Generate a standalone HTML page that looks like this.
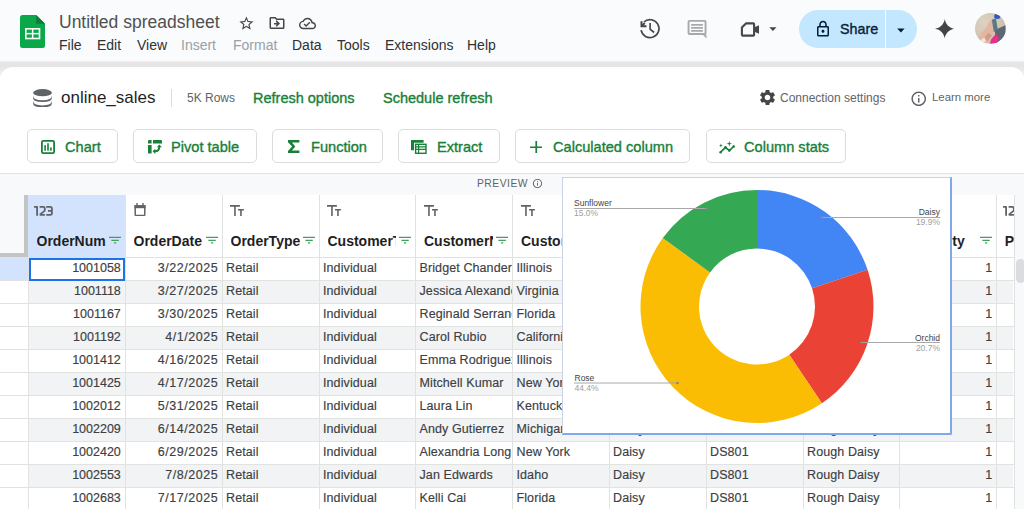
<!DOCTYPE html>
<html><head><meta charset="utf-8"><style>
*{margin:0;padding:0;box-sizing:border-box}
html,body{width:1024px;height:509px;overflow:hidden;background:#f9fbfd;font-family:"Liberation Sans",sans-serif;position:relative}
.a{position:absolute;white-space:nowrap}
#title{left:59px;top:12px;font-size:17.5px;color:#505050}
.menu{top:36.6px;font-size:14px;color:#303134}
.menu.dis{color:#9aa0a6}
#band{left:0;top:60.5px;width:1024px;height:22px;background:linear-gradient(to bottom,#f3f4f5 0,#e6e6e6 1.5px,#e5e5e5 6px,#f2f2f2 14px,#ffffff 21px)}
#card{left:0;top:66.8px;width:1024px;height:442px;background:#fff;border-radius:13px 13px 0 0}
.green{color:#188038;font-size:14.5px;-webkit-text-stroke:0.35px #188038}
.btn{position:absolute;top:128.5px;height:34px;border:1px solid #dadce0;border-radius:5px;background:#fff}
.btn span{position:absolute;top:9px;font-size:14.6px;color:#188038;-webkit-text-stroke:0.35px #188038;white-space:nowrap}
#preview{left:0;top:173px;width:1024px;height:22.5px;background:#f8f9fa;border-top:1px solid #e3e3e3;border-bottom:1px solid #e6e6e6}
.rowbg{position:absolute;left:28px;width:985.4px;height:23px}
.hl{position:absolute;left:0;width:1014.2px;height:1px;background:#e1e3e1}
.vl{position:absolute;top:195px;width:1px;height:314px;background:#e1e3e1}
.cell{position:absolute;height:23px;line-height:21.5px;font-size:12.5px;color:#3c4043;-webkit-text-stroke:0.15px #3c4043;padding:0 4px;overflow:hidden;white-space:nowrap}
.cell.r{text-align:right;padding-right:5px}
.hname{position:absolute;top:233px;font-size:14px;font-weight:bold;color:#1f1f1f;white-space:nowrap;overflow:hidden}
.ttype{position:absolute;top:204px;font-size:12px;color:#444;white-space:nowrap}

</style></head><body>
<!-- top bar -->
<svg class="a" style="left:20px;top:15px" width="25" height="33" viewBox="0 0 25 33">
<path d="M2.5 0H16.2L25 8.7V30.5Q25 33 22.5 33H2.5Q0 33 0 30.5V2.5Q0 0 2.5 0Z" fill="#0ba84a"/>
<path d="M16.2 0L25 8.7H16.2Z" fill="#0a7f38"/>
<rect x="5" y="13" width="15.3" height="11.3" fill="#fff"/>
<rect x="6.6" y="14.6" width="5.3" height="3.3" fill="#0ba84a"/><rect x="13.4" y="14.6" width="5.3" height="3.3" fill="#0ba84a"/>
<rect x="6.6" y="19.4" width="5.3" height="3.3" fill="#0ba84a"/><rect x="13.4" y="19.4" width="5.3" height="3.3" fill="#0ba84a"/>
</svg>
<div id="title" class="a">Untitled spreadsheet</div>
<svg class="a" style="left:238.1px;top:14.6px" width="16.8" height="16.8" viewBox="0 0 24 24"><path fill="#444746" d="M22 9.24l-7.19-.62L12 2 9.19 8.63 2 9.24l5.46 4.73L5.82 21 12 17.27 18.18 21l-1.63-7.03L22 9.24zM12 15.4l-3.760 2.270 1-4.280-3.320-2.880 4.380-.38L12 6.1l1.710 4.040 4.380.38-3.320 2.880 1 4.280L12 15.4z"/></svg>
<svg class="a" style="left:267.8px;top:14.3px" width="18" height="18" viewBox="0 0 24 24"><path fill="#444746" d="M20 6h-8l-2-2H4c-1.1 0-1.990.9-1.990 2L2 18c0 1.1.9 2 2 2h16c1.1 0 2-.9 2-2V8c0-1.1-.9-2-2-2zm0 12H4V6h5.170l2 2H20v10zm-8.160-6H8v2h3.840l-1.590 1.590L11.660 17 16 12.670 11.660 8.340l-1.410 1.410L11.840 12z"/></svg>
<svg class="a" style="left:299.2px;top:14.5px" width="17" height="17" viewBox="0 0 24 24"><path fill="#444746" d="M19.350 10.040C18.670 6.590 15.640 4 12 4 9.110 4 6.600 5.640 5.350 8.040 2.340 8.360 0 10.910 0 14c0 3.310 2.690 6 6 6h13c2.760 0 5-2.240 5-5 0-2.640-2.050-4.780-4.650-4.960zM19 18H6c-2.210 0-4-1.790-4-4 0-2.050 1.530-3.760 3.560-3.970l1.070-.11.5-.95C8.080 7.140 9.940 6 12 6c2.620 0 4.880 1.860 5.390 4.430l.3 1.500 1.530.11c1.560.1 2.780 1.410 2.780 2.960 0 1.650-1.350 3-3 3zm-9-3.820l-2.090-2.090L6.500 13.500 10 17l6.010-6.010-1.410-1.410z"/></svg>
<div class="a menu" style="left:59px">File</div>
<div class="a menu" style="left:97px">Edit</div>
<div class="a menu" style="left:137px">View</div>
<div class="a menu dis" style="left:181px">Insert</div>
<div class="a menu dis" style="left:233px">Format</div>
<div class="a menu" style="left:292px">Data</div>
<div class="a menu" style="left:337px">Tools</div>
<div class="a menu" style="left:385px">Extensions</div>
<div class="a menu" style="left:467px">Help</div>

<!-- right header icons -->
<svg class="a" style="left:636px;top:14px" width="30" height="30" viewBox="636 14 30 30"><g fill="none" stroke="#444746" stroke-width="1.65"><path d="M641.1 30.2A9 9 0 1 0 643.9 22"/><path d="M641.5 21.2V26.3H646.5" stroke-width="2" stroke-linejoin="miter"/><path d="M641.8 26L644.8 23" stroke-width="1.8"/><path d="M650.1 23V29.2L654.1 32.5"/></g></svg>
<svg class="a" style="left:686px;top:19px" width="22" height="22" viewBox="0 0 22 22"><rect x="2.55" y="1.85" width="17" height="13.1" rx="0.9" fill="none" stroke="#a9a9a9" stroke-width="1.9"/><path fill="#a9a9a9" d="M16.8 15.8H20.5V19.4Z"/><path stroke="#a9a9a9" stroke-width="1.7" d="M5.1 5.9H16.9M5.1 8.85H16.9M5.1 11.8H16.9"/></svg>
<svg class="a" style="left:739px;top:20px" width="22" height="19" viewBox="0 0 22 19"><path fill="none" stroke="#444746" stroke-width="2.1" stroke-linejoin="round" d="M6.9 3.4H14.2Q15.1 3.4 15.1 4.3V14.7Q15.1 15.6 14.2 15.6H3.8Q2.9 15.6 2.9 14.7V7.4Z"/><path fill="#444746" d="M15 7.6L20 5.2V13.8L15 11.4Z"/></svg>
<svg class="a" style="left:769px;top:26.8px" width="8" height="4.2" viewBox="0 0 8 4.2"><path fill="#444746" d="M0.3 0.2H7.5L3.9 4Z"/></svg>

<div class="a" style="left:798.7px;top:9.6px;width:118.8px;height:38.4px;border-radius:19.2px;background:#c2e7ff"></div>
<div class="a" style="left:885px;top:9.6px;width:1px;height:38.4px;background:#f9fbfd"></div>
<svg class="a" style="left:814.4px;top:20px" width="18" height="18" viewBox="0 0 24 24"><path fill="#001d35" d="M18 8h-1V6c0-2.760-2.240-5-5-5S7 3.240 7 6v2H6c-1.1 0-2 .9-2 2v10c0 1.1.9 2 2 2h12c1.1 0 2-.9 2-2V10c0-1.1-.9-2-2-2zM9 6c0-1.660 1.340-3 3-3s3 1.340 3 3v2H9V6zm9 14H6V10h12v10zm-6-3c1.1 0 2-.9 2-2s-.9-2-2-2-2 .9-2 2 .9 2 2 2z"/></svg>
<div class="a" style="left:840px;top:20.5px;font-size:14.3px;color:#0b2136;-webkit-text-stroke:0.35px #0b2136">Share</div>
<svg class="a" style="left:897px;top:27.5px" width="8" height="5" viewBox="0 0 8 5"><path fill="#001d35" d="M0.2 0.4H7.6L3.9 4.4Z"/></svg>
<svg class="a" style="left:934.5px;top:19.2px" width="19.5" height="19.5" viewBox="0 0 24 24"><path fill="#444444" d="M12 0C12.9 6.4 17.6 11.1 24 12C17.6 12.9 12.9 17.6 12 24C11.1 17.6 6.4 12.9 0 12C6.4 11.1 11.1 6.4 12 0Z"/></svg>
<svg class="a" style="left:975.1px;top:13.1px" width="30.8" height="30.8" viewBox="0 0 31 31">
<defs><clipPath id="av"><circle cx="15.5" cy="15.5" r="15.5"/></clipPath><radialGradient id="avg" cx="0.3" cy="0.3" r="0.9"><stop offset="0" stop-color="#ddd3c2"/><stop offset="1" stop-color="#c9b9a6"/></radialGradient></defs>
<g clip-path="url(#av)"><rect width="31" height="31" fill="url(#avg)"/>
<path d="M20 17L31 12V31H21Z" fill="#5e6673"/>
<path d="M3 26L6 21L11 15L15 8L19 5L22 8L21 15L18 21L14 26L9 31H4Z" fill="#e2b6a0"/>
<path d="M10 24L14 20L17 23L12 29Z" fill="#d19c8a"/>
<path d="M17 7L21 5L23 17L19 19Z" fill="#567a86"/>
<ellipse cx="22.5" cy="3.2" rx="3.2" ry="2.8" fill="#2d5bc4"/>
<path d="M16 27L21 21L24 25L23 31H15Z" fill="#e6308a"/>
<path d="M5 28L9 25L11 28L8 31Z" fill="#f3e6dc"/>
</g></svg>

<div id="band" class="a"></div>
<div id="card" class="a"></div>

<svg class="a" style="left:32.8px;top:88.9px" width="19" height="18.5" viewBox="0 0 19 18.5">
<ellipse cx="9.5" cy="3.7" rx="9.4" ry="3.6" fill="#5f6368"/>
<path d="M0.1 6.5Q0.1 11.3 9.5 11.3Q18.9 11.3 18.9 6.5V8.9Q18.9 12.9 9.5 12.9Q0.1 12.9 0.1 8.9Z" fill="#5f6368"/>
<path d="M0.1 11.6Q0.1 16.5 9.5 16.5Q18.9 16.5 18.9 11.6V14.3Q18.9 18.3 9.5 18.3Q0.1 18.3 0.1 14.3Z" fill="#5f6368"/>
</svg>
<div class="a" style="left:61px;top:88px;font-size:17px;color:#1f1f1f">online_sales</div>
<div class="a" style="left:171px;top:89px;width:1px;height:18px;background:#dadce0"></div>
<div class="a" style="left:187px;top:91px;font-size:12px;color:#5f6368">5K Rows</div>
<div class="a green" style="left:253px;top:90.3px">Refresh options</div>
<div class="a green" style="left:383px;top:90.3px">Schedule refresh</div>
<svg class="a" style="left:757.5px;top:88.2px" width="19" height="19" viewBox="0 0 24 24"><path fill="#444746" d="M19.140 12.940c.04-.3.06-.61.06-.94 0-.32-.02-.64-.07-.94l2.030-1.580c.18-.14.23-.41.12-.61l-1.920-3.320c-.12-.22-.37-.29-.59-.22l-2.390.96c-.5-.38-1.030-.7-1.620-.94l-.36-2.540c-.04-.24-.24-.41-.48-.41h-3.840c-.24 0-.43.17-.47.41l-.36 2.540c-.59.24-1.130.57-1.620.94l-2.390-.96c-.22-.08-.47 0-.59.22L2.740 8.870c-.12.21-.08.47.12.61l2.030 1.580c-.05.3-.09.63-.09.94s.02.64.07.94l-2.030 1.580c-.18.14-.23.41-.12.61l1.920 3.320c.12.22.37.29.59.22l2.390-.96c.5.38 1.030.7 1.620.94l.36 2.540c.05.24.24.41.48.41h3.840c.24 0 .44-.17.47-.41l.36-2.540c.59-.24 1.130-.56 1.620-.94l2.390.96c.22.08.47 0 .59-.22l1.920-3.320c.12-.22.07-.47-.12-.61l-2.010-1.580zM12 15.600c-1.980 0-3.600-1.620-3.600-3.600s1.620-3.600 3.600-3.600 3.600 1.620 3.600 3.600-1.620 3.600-3.600 3.600z"/></svg>
<div class="a" style="left:780px;top:91px;font-size:12px;color:#5f6368">Connection settings</div>
<svg class="a" style="left:909.5px;top:90.2px" width="17.5" height="17.5" viewBox="0 0 24 24"><path fill="#5f6368" d="M11 7h2v2h-2zm0 4h2v6h-2zm1-9C6.480 2 2 6.480 2 12s4.480 10 10 10 10-4.480 10-10S17.520 2 12 2zm0 18c-4.410 0-8-3.590-8-8s3.590-8 8-8 8 3.590 8 8-3.590 8-8 8z"/></svg>
<div class="a" style="left:932px;top:91px;font-size:11.4px;color:#5f6368">Learn more</div>

<div class="btn" style="left:27px;width:91px"><span style="left:37px">Chart</span></div>
<div class="btn" style="left:133px;width:124px"><span style="left:37px">Pivot table</span></div>
<div class="btn" style="left:272px;width:111px"><span style="left:38px">Function</span></div>
<div class="btn" style="left:398px;width:102px"><span style="left:38px">Extract</span></div>
<div class="btn" style="left:515px;width:175px"><span style="left:37px">Calculated column</span></div>
<div class="btn" style="left:706px;width:140px"><span style="left:37px">Column stats</span></div>
<!-- button icons -->
<svg class="a" style="left:41px;top:139.8px" width="14" height="14" viewBox="0 0 14 14"><rect x="0.9" y="0.9" width="12.2" height="12.2" rx="1.3" fill="none" stroke="#188038" stroke-width="1.8"/><rect x="3.3" y="5.2" width="1.6" height="5.5" fill="#188038"/><rect x="6.2" y="3.3" width="1.6" height="7.4" fill="#188038"/><rect x="9.1" y="7.5" width="1.6" height="3.2" fill="#188038"/></svg>
<svg class="a" style="left:147.5px;top:139.8px" width="14" height="14" viewBox="0 0 14 14"><path fill="#188038" d="M0 3.5V1.2Q0 0 1.2 0H3.6V3.5Z M5 0H12.8Q14 0 14 1.2V3.5H5Z M0 5H3.6V13.6H1.2Q0 13.6 0 12.4Z"/><path fill="none" stroke="#188038" stroke-width="2" d="M6.8 11.3Q11.3 11.3 11.3 6.8"/><path fill="#188038" d="M8.9 7.3L11.3 4.6L13.9 7.3Z M7.3 8.8L4.6 11.3L7.3 13.9Z"/></svg>
<svg class="a" style="left:287.5px;top:139.8px" width="12" height="13.2" viewBox="0 0 12 13.2"><path fill="#188038" d="M0 0H11.4V2.6H3.9L7.3 6.6L3.9 10.6H11.4V13.2H0V10.9L4.1 6.6L0 2.3Z"/></svg>
<svg class="a" style="left:411px;top:139.8px" width="16" height="14" viewBox="0 0 16 14"><path fill="#188038" d="M0 0H12.6V2.8H3V10.3H0Z"/><rect x="4.6" y="4.3" width="10.4" height="9" fill="none" stroke="#188038" stroke-width="1.4"/><path stroke="#188038" stroke-width="1.2" d="M4.6 6.9H15M4.6 9.4H15M7.6 4.3V13.3"/></svg>
<svg class="a" style="left:529.5px;top:140.5px" width="12.5" height="12.5" viewBox="0 0 12.5 12.5"><path stroke="#188038" stroke-width="1.7" d="M0 6.25H12.5M6.25 0V12.5"/></svg>
<svg class="a" style="left:718.5px;top:140.5px" width="16.5" height="13" viewBox="0 0 16.5 13"><path fill="none" stroke="#188038" stroke-width="1.7" stroke-linecap="round" stroke-linejoin="round" d="M1.6 11.2L6.5 6.3L10.3 9.6L14.7 5.5"/><g fill="#188038"><circle cx="1.6" cy="11.2" r="1.25"/><circle cx="6.5" cy="6.3" r="1.25"/><circle cx="10.3" cy="9.6" r="1.25"/><circle cx="14.7" cy="5.5" r="1.25"/><path d="M1.9 2.6L2.4 4L3.8 4.5L2.4 5L1.9 6.4L1.4 5L0 4.5L1.4 4Z M10.3 0L10.9 2.1L13 2.7L10.9 3.3L10.3 5.4L9.7 3.3L7.6 2.7L9.7 2.1Z"/></g></svg>

<div id="preview" class="a"></div>
<div class="a" style="left:477px;top:178px;font-size:10.3px;color:#5f6368;letter-spacing:0.5px">PREVIEW</div>
<svg class="a" style="left:531.5px;top:178px" width="11" height="11" viewBox="0 0 24 24"><path fill="#5f6368" d="M11 7h2v2h-2zm0 4h2v6h-2zm1-9C6.480 2 2 6.480 2 12s4.480 10 10 10 10-4.480 10-10S17.520 2 12 2zm0 18c-4.410 0-8-3.590-8-8s3.590-8 8-8 8 3.590 8 8-3.590 8-8 8z"/></svg>

<!-- grid -->
<div class="a" style="left:0;top:195px;width:1024px;height:314px;background:#fff"></div>
<div class="a" style="left:1014.2px;top:195px;width:10px;height:314px;background:#f8f9fa"></div>
<div class="a" style="left:0;top:195px;width:24px;height:58px;background:#f8f9fa"></div>
<div class="a" style="left:24px;top:195px;width:4px;height:62.5px;background:#c4c4c4"></div>
<div class="a" style="left:0;top:252.8px;width:28px;height:4.7px;background:#c4c4c4"></div>
<div class="a" style="left:28px;top:195px;width:97px;height:62.5px;background:#d3e3fd"></div>
<div class="rowbg" style="top:257.5px;background:#ffffff"></div>
<div class="rowbg" style="top:280.5px;background:#f1f3f4"></div>
<div class="rowbg" style="top:303.5px;background:#ffffff"></div>
<div class="rowbg" style="top:326.5px;background:#f1f3f4"></div>
<div class="rowbg" style="top:349.5px;background:#ffffff"></div>
<div class="rowbg" style="top:372.5px;background:#f1f3f4"></div>
<div class="rowbg" style="top:395.5px;background:#ffffff"></div>
<div class="rowbg" style="top:418.5px;background:#f1f3f4"></div>
<div class="rowbg" style="top:441.5px;background:#ffffff"></div>
<div class="rowbg" style="top:464.5px;background:#f1f3f4"></div>
<div class="rowbg" style="top:487.5px;background:#ffffff"></div>
<div class="hl" style="top:257.0px"></div>
<div class="hl" style="top:280.0px"></div>
<div class="hl" style="top:303.0px"></div>
<div class="hl" style="top:326.0px"></div>
<div class="hl" style="top:349.0px"></div>
<div class="hl" style="top:372.0px"></div>
<div class="hl" style="top:395.0px"></div>
<div class="hl" style="top:418.0px"></div>
<div class="hl" style="top:441.0px"></div>
<div class="hl" style="top:464.0px"></div>
<div class="hl" style="top:487.0px"></div>
<div class="hl" style="top:510.0px"></div>
<div class="vl" style="left:124.5px"></div>
<div class="vl" style="left:221.5px"></div>
<div class="vl" style="left:318.5px"></div>
<div class="vl" style="left:415.0px"></div>
<div class="vl" style="left:512.0px"></div>
<div class="vl" style="left:608.5px"></div>
<div class="vl" style="left:705.5px"></div>
<div class="vl" style="left:802.5px"></div>
<div class="vl" style="left:899.0px"></div>
<div class="vl" style="left:996.0px"></div>
<div class="vl" style="left:1013.7px"></div>
<div class="vl" style="left:28px;top:257px;height:252px"></div>
<div class="cell r" style="top:257.5px;left:28px;width:97px;letter-spacing:0px;padding-right:4.2px">1001058</div>
<div class="cell r" style="top:257.5px;left:125px;width:97px;letter-spacing:0.55px;padding-right:3.7px">3/22/2025</div>
<div class="cell" style="top:257.5px;left:222px;width:96.5px;letter-spacing:0.1px">Retail</div>
<div class="cell" style="top:257.5px;left:319px;width:96.0px;letter-spacing:0.1px">Individual</div>
<div class="cell" style="top:257.5px;left:415.5px;width:96.5px;letter-spacing:0.1px">Bridget Chander</div>
<div class="cell" style="top:257.5px;left:512.5px;width:96.0px;letter-spacing:0.1px">Illinois</div>
<div class="cell" style="top:257.5px;left:609px;width:96.5px;letter-spacing:0.1px">Daisy</div>
<div class="cell" style="top:257.5px;left:706px;width:96.5px;letter-spacing:0.1px">DS801</div>
<div class="cell" style="top:257.5px;left:803px;width:96.0px;letter-spacing:0.1px">Rough Daisy</div>
<div class="cell r" style="top:257.5px;left:899.5px;width:97.0px;letter-spacing:0px;padding-right:4.2px">1</div>
<div class="cell r" style="top:280.5px;left:28px;width:97px;letter-spacing:0px;padding-right:4.2px">1001118</div>
<div class="cell r" style="top:280.5px;left:125px;width:97px;letter-spacing:0.55px;padding-right:3.7px">3/27/2025</div>
<div class="cell" style="top:280.5px;left:222px;width:96.5px;letter-spacing:0.1px">Retail</div>
<div class="cell" style="top:280.5px;left:319px;width:96.0px;letter-spacing:0.1px">Individual</div>
<div class="cell" style="top:280.5px;left:415.5px;width:96.5px;letter-spacing:0.1px">Jessica Alexander</div>
<div class="cell" style="top:280.5px;left:512.5px;width:96.0px;letter-spacing:0.1px">Virginia</div>
<div class="cell" style="top:280.5px;left:609px;width:96.5px;letter-spacing:0.1px">Daisy</div>
<div class="cell" style="top:280.5px;left:706px;width:96.5px;letter-spacing:0.1px">DS801</div>
<div class="cell" style="top:280.5px;left:803px;width:96.0px;letter-spacing:0.1px">Rough Daisy</div>
<div class="cell r" style="top:280.5px;left:899.5px;width:97.0px;letter-spacing:0px;padding-right:4.2px">1</div>
<div class="cell r" style="top:303.5px;left:28px;width:97px;letter-spacing:0px;padding-right:4.2px">1001167</div>
<div class="cell r" style="top:303.5px;left:125px;width:97px;letter-spacing:0.55px;padding-right:3.7px">3/30/2025</div>
<div class="cell" style="top:303.5px;left:222px;width:96.5px;letter-spacing:0.1px">Retail</div>
<div class="cell" style="top:303.5px;left:319px;width:96.0px;letter-spacing:0.1px">Individual</div>
<div class="cell" style="top:303.5px;left:415.5px;width:96.5px;letter-spacing:0.1px">Reginald Serrano</div>
<div class="cell" style="top:303.5px;left:512.5px;width:96.0px;letter-spacing:0.1px">Florida</div>
<div class="cell" style="top:303.5px;left:609px;width:96.5px;letter-spacing:0.1px">Daisy</div>
<div class="cell" style="top:303.5px;left:706px;width:96.5px;letter-spacing:0.1px">DS801</div>
<div class="cell" style="top:303.5px;left:803px;width:96.0px;letter-spacing:0.1px">Rough Daisy</div>
<div class="cell r" style="top:303.5px;left:899.5px;width:97.0px;letter-spacing:0px;padding-right:4.2px">1</div>
<div class="cell r" style="top:326.5px;left:28px;width:97px;letter-spacing:0px;padding-right:4.2px">1001192</div>
<div class="cell r" style="top:326.5px;left:125px;width:97px;letter-spacing:0.55px;padding-right:3.7px">4/1/2025</div>
<div class="cell" style="top:326.5px;left:222px;width:96.5px;letter-spacing:0.1px">Retail</div>
<div class="cell" style="top:326.5px;left:319px;width:96.0px;letter-spacing:0.1px">Individual</div>
<div class="cell" style="top:326.5px;left:415.5px;width:96.5px;letter-spacing:0.1px">Carol Rubio</div>
<div class="cell" style="top:326.5px;left:512.5px;width:96.0px;letter-spacing:0.1px">California</div>
<div class="cell" style="top:326.5px;left:609px;width:96.5px;letter-spacing:0.1px">Daisy</div>
<div class="cell" style="top:326.5px;left:706px;width:96.5px;letter-spacing:0.1px">DS801</div>
<div class="cell" style="top:326.5px;left:803px;width:96.0px;letter-spacing:0.1px">Rough Daisy</div>
<div class="cell r" style="top:326.5px;left:899.5px;width:97.0px;letter-spacing:0px;padding-right:4.2px">1</div>
<div class="cell r" style="top:349.5px;left:28px;width:97px;letter-spacing:0px;padding-right:4.2px">1001412</div>
<div class="cell r" style="top:349.5px;left:125px;width:97px;letter-spacing:0.55px;padding-right:3.7px">4/16/2025</div>
<div class="cell" style="top:349.5px;left:222px;width:96.5px;letter-spacing:0.1px">Retail</div>
<div class="cell" style="top:349.5px;left:319px;width:96.0px;letter-spacing:0.1px">Individual</div>
<div class="cell" style="top:349.5px;left:415.5px;width:96.5px;letter-spacing:0.1px">Emma Rodriguez</div>
<div class="cell" style="top:349.5px;left:512.5px;width:96.0px;letter-spacing:0.1px">Illinois</div>
<div class="cell" style="top:349.5px;left:609px;width:96.5px;letter-spacing:0.1px">Daisy</div>
<div class="cell" style="top:349.5px;left:706px;width:96.5px;letter-spacing:0.1px">DS801</div>
<div class="cell" style="top:349.5px;left:803px;width:96.0px;letter-spacing:0.1px">Rough Daisy</div>
<div class="cell r" style="top:349.5px;left:899.5px;width:97.0px;letter-spacing:0px;padding-right:4.2px">1</div>
<div class="cell r" style="top:372.5px;left:28px;width:97px;letter-spacing:0px;padding-right:4.2px">1001425</div>
<div class="cell r" style="top:372.5px;left:125px;width:97px;letter-spacing:0.55px;padding-right:3.7px">4/17/2025</div>
<div class="cell" style="top:372.5px;left:222px;width:96.5px;letter-spacing:0.1px">Retail</div>
<div class="cell" style="top:372.5px;left:319px;width:96.0px;letter-spacing:0.1px">Individual</div>
<div class="cell" style="top:372.5px;left:415.5px;width:96.5px;letter-spacing:0.1px">Mitchell Kumar</div>
<div class="cell" style="top:372.5px;left:512.5px;width:96.0px;letter-spacing:0.1px">New York</div>
<div class="cell" style="top:372.5px;left:609px;width:96.5px;letter-spacing:0.1px">Daisy</div>
<div class="cell" style="top:372.5px;left:706px;width:96.5px;letter-spacing:0.1px">DS801</div>
<div class="cell" style="top:372.5px;left:803px;width:96.0px;letter-spacing:0.1px">Rough Daisy</div>
<div class="cell r" style="top:372.5px;left:899.5px;width:97.0px;letter-spacing:0px;padding-right:4.2px">1</div>
<div class="cell r" style="top:395.5px;left:28px;width:97px;letter-spacing:0px;padding-right:4.2px">1002012</div>
<div class="cell r" style="top:395.5px;left:125px;width:97px;letter-spacing:0.55px;padding-right:3.7px">5/31/2025</div>
<div class="cell" style="top:395.5px;left:222px;width:96.5px;letter-spacing:0.1px">Retail</div>
<div class="cell" style="top:395.5px;left:319px;width:96.0px;letter-spacing:0.1px">Individual</div>
<div class="cell" style="top:395.5px;left:415.5px;width:96.5px;letter-spacing:0.1px">Laura Lin</div>
<div class="cell" style="top:395.5px;left:512.5px;width:96.0px;letter-spacing:0.1px">Kentucky</div>
<div class="cell" style="top:395.5px;left:609px;width:96.5px;letter-spacing:0.1px">Daisy</div>
<div class="cell" style="top:395.5px;left:706px;width:96.5px;letter-spacing:0.1px">DS801</div>
<div class="cell" style="top:395.5px;left:803px;width:96.0px;letter-spacing:0.1px">Rough Daisy</div>
<div class="cell r" style="top:395.5px;left:899.5px;width:97.0px;letter-spacing:0px;padding-right:4.2px">1</div>
<div class="cell r" style="top:418.5px;left:28px;width:97px;letter-spacing:0px;padding-right:4.2px">1002209</div>
<div class="cell r" style="top:418.5px;left:125px;width:97px;letter-spacing:0.55px;padding-right:3.7px">6/14/2025</div>
<div class="cell" style="top:418.5px;left:222px;width:96.5px;letter-spacing:0.1px">Retail</div>
<div class="cell" style="top:418.5px;left:319px;width:96.0px;letter-spacing:0.1px">Individual</div>
<div class="cell" style="top:418.5px;left:415.5px;width:96.5px;letter-spacing:0.1px">Andy Gutierrez</div>
<div class="cell" style="top:418.5px;left:512.5px;width:96.0px;letter-spacing:0.1px">Michigan</div>
<div class="cell" style="top:418.5px;left:609px;width:96.5px;letter-spacing:0.1px">Daisy</div>
<div class="cell" style="top:418.5px;left:706px;width:96.5px;letter-spacing:0.1px">DS801</div>
<div class="cell" style="top:418.5px;left:803px;width:96.0px;letter-spacing:0.1px">Rough Daisy</div>
<div class="cell r" style="top:418.5px;left:899.5px;width:97.0px;letter-spacing:0px;padding-right:4.2px">1</div>
<div class="cell r" style="top:441.5px;left:28px;width:97px;letter-spacing:0px;padding-right:4.2px">1002420</div>
<div class="cell r" style="top:441.5px;left:125px;width:97px;letter-spacing:0.55px;padding-right:3.7px">6/29/2025</div>
<div class="cell" style="top:441.5px;left:222px;width:96.5px;letter-spacing:0.1px">Retail</div>
<div class="cell" style="top:441.5px;left:319px;width:96.0px;letter-spacing:0.1px">Individual</div>
<div class="cell" style="top:441.5px;left:415.5px;width:96.5px;letter-spacing:0.1px">Alexandria Long</div>
<div class="cell" style="top:441.5px;left:512.5px;width:96.0px;letter-spacing:0.1px">New York</div>
<div class="cell" style="top:441.5px;left:609px;width:96.5px;letter-spacing:0.1px">Daisy</div>
<div class="cell" style="top:441.5px;left:706px;width:96.5px;letter-spacing:0.1px">DS801</div>
<div class="cell" style="top:441.5px;left:803px;width:96.0px;letter-spacing:0.1px">Rough Daisy</div>
<div class="cell r" style="top:441.5px;left:899.5px;width:97.0px;letter-spacing:0px;padding-right:4.2px">1</div>
<div class="cell r" style="top:464.5px;left:28px;width:97px;letter-spacing:0px;padding-right:4.2px">1002553</div>
<div class="cell r" style="top:464.5px;left:125px;width:97px;letter-spacing:0.55px;padding-right:3.7px">7/8/2025</div>
<div class="cell" style="top:464.5px;left:222px;width:96.5px;letter-spacing:0.1px">Retail</div>
<div class="cell" style="top:464.5px;left:319px;width:96.0px;letter-spacing:0.1px">Individual</div>
<div class="cell" style="top:464.5px;left:415.5px;width:96.5px;letter-spacing:0.1px">Jan Edwards</div>
<div class="cell" style="top:464.5px;left:512.5px;width:96.0px;letter-spacing:0.1px">Idaho</div>
<div class="cell" style="top:464.5px;left:609px;width:96.5px;letter-spacing:0.1px">Daisy</div>
<div class="cell" style="top:464.5px;left:706px;width:96.5px;letter-spacing:0.1px">DS801</div>
<div class="cell" style="top:464.5px;left:803px;width:96.0px;letter-spacing:0.1px">Rough Daisy</div>
<div class="cell r" style="top:464.5px;left:899.5px;width:97.0px;letter-spacing:0px;padding-right:4.2px">1</div>
<div class="cell r" style="top:487.5px;left:28px;width:97px;letter-spacing:0px;padding-right:4.2px">1002683</div>
<div class="cell r" style="top:487.5px;left:125px;width:97px;letter-spacing:0.55px;padding-right:3.7px">7/17/2025</div>
<div class="cell" style="top:487.5px;left:222px;width:96.5px;letter-spacing:0.1px">Retail</div>
<div class="cell" style="top:487.5px;left:319px;width:96.0px;letter-spacing:0.1px">Individual</div>
<div class="cell" style="top:487.5px;left:415.5px;width:96.5px;letter-spacing:0.1px">Kelli Cai</div>
<div class="cell" style="top:487.5px;left:512.5px;width:96.0px;letter-spacing:0.1px">Florida</div>
<div class="cell" style="top:487.5px;left:609px;width:96.5px;letter-spacing:0.1px">Daisy</div>
<div class="cell" style="top:487.5px;left:706px;width:96.5px;letter-spacing:0.1px">DS801</div>
<div class="cell" style="top:487.5px;left:803px;width:96.0px;letter-spacing:0.1px">Rough Daisy</div>
<div class="cell r" style="top:487.5px;left:899.5px;width:97.0px;letter-spacing:0px;padding-right:4.2px">1</div>
<div class="a" style="left:0;top:258px;width:28px;height:22px;background:#d3e3fd"></div>
<div class="a" style="left:28.5px;top:257.5px;width:96.5px;height:23px;border:2px solid #1a73e8"></div>


<svg class="a" style="left:134px;top:203px" width="12" height="13.2" viewBox="0 0 12 13.2"><path fill="none" stroke="#5f6368" stroke-width="1.5" d="M1.2 3H10.8V11.5Q10.8 12.5 9.8 12.5H2.2Q1.2 12.5 1.2 11.5Z"/><rect x="0.5" y="2.2" width="11" height="3" fill="#5f6368"/><path stroke="#5f6368" stroke-width="1.4" d="M3 0V3M9 0V3"/></svg>

<div class="hname" style="left:36.5px;width:69.1px">OrderNum</div>
<svg class="a" style="left:108.6px;top:236px" width="12.2" height="8" viewBox="0 0 12.2 8"><path fill="none" stroke="#41a05e" stroke-width="1.3" d="M0 1.3H12.2M2.4 4.3H9.8M5 6.9H7.2"/></svg>
<div class="hname" style="left:133.5px;width:69.1px">OrderDate</div>
<svg class="a" style="left:205.6px;top:236px" width="12.2" height="8" viewBox="0 0 12.2 8"><path fill="none" stroke="#41a05e" stroke-width="1.3" d="M0 1.3H12.2M2.4 4.3H9.8M5 6.9H7.2"/></svg>
<div class="hname" style="left:230.5px;width:69.1px">OrderType</div>
<svg class="a" style="left:302.6px;top:236px" width="12.2" height="8" viewBox="0 0 12.2 8"><path fill="none" stroke="#41a05e" stroke-width="1.3" d="M0 1.3H12.2M2.4 4.3H9.8M5 6.9H7.2"/></svg>
<div class="hname" style="left:327.5px;width:68.6px">CustomerType</div>
<svg class="a" style="left:399.1px;top:236px" width="12.2" height="8" viewBox="0 0 12.2 8"><path fill="none" stroke="#41a05e" stroke-width="1.3" d="M0 1.3H12.2M2.4 4.3H9.8M5 6.9H7.2"/></svg>
<div class="hname" style="left:424.0px;width:69.1px">CustomerName</div>
<svg class="a" style="left:496.1px;top:236px" width="12.2" height="8" viewBox="0 0 12.2 8"><path fill="none" stroke="#41a05e" stroke-width="1.3" d="M0 1.3H12.2M2.4 4.3H9.8M5 6.9H7.2"/></svg>
<div class="hname" style="left:521.0px;width:68.6px">CustomerState</div>
<svg class="a" style="left:592.6px;top:236px" width="12.2" height="8" viewBox="0 0 12.2 8"><path fill="none" stroke="#41a05e" stroke-width="1.3" d="M0 1.3H12.2M2.4 4.3H9.8M5 6.9H7.2"/></svg>
<div class="hname" style="left:908.0px;width:69.1px">Quantity</div>
<svg class="a" style="left:980.1px;top:236px" width="12.2" height="8" viewBox="0 0 12.2 8"><path fill="none" stroke="#41a05e" stroke-width="1.3" d="M0 1.3H12.2M2.4 4.3H9.8M5 6.9H7.2"/></svg>
<div class="hname" style="left:1004.8px;width:9.4px">Product</div>
<svg class="a" style="left:230px;top:204px" width="15" height="13" viewBox="0 0 15 13"><path fill="none" stroke="#5f6368" stroke-width="1.6" d="M0 1.9H9.9M4.95 1.9V12M8 5.8H13.9M10.95 5.8V12"/></svg>
<svg class="a" style="left:327px;top:204px" width="15" height="13" viewBox="0 0 15 13"><path fill="none" stroke="#5f6368" stroke-width="1.6" d="M0 1.9H9.9M4.95 1.9V12M8 5.8H13.9M10.95 5.8V12"/></svg>
<svg class="a" style="left:423.5px;top:204px" width="15" height="13" viewBox="0 0 15 13"><path fill="none" stroke="#5f6368" stroke-width="1.6" d="M0 1.9H9.9M4.95 1.9V12M8 5.8H13.9M10.95 5.8V12"/></svg>
<svg class="a" style="left:520.5px;top:204px" width="15" height="13" viewBox="0 0 15 13"><path fill="none" stroke="#5f6368" stroke-width="1.6" d="M0 1.9H9.9M4.95 1.9V12M8 5.8H13.9M10.95 5.8V12"/></svg>
<svg class="a" style="left:34.1px;top:206.1px" width="19" height="10" viewBox="0 0 19 10"><path fill="none" stroke="#5f6368" stroke-width="1.8" stroke-linejoin="round" d="M0 0.95H3.1V9.7M5.6 0.95H9.2Q10.8 0.95 10.8 2.5V3.9Q10.8 4.8 10 5.4L6.4 8.1V8.8H10.9M12.2 0.95H16.2Q17.9 0.95 17.9 2.6V7.2Q17.9 8.8 16.2 8.8H12.2M14 4.85H17.9"/></svg>
<svg class="a" style="left:1002.7px;top:206.1px" width="11.5" height="10" viewBox="0 0 11.5 10"><path fill="none" stroke="#5f6368" stroke-width="1.8" stroke-linejoin="round" d="M0 0.95H3.1V9.7M5.6 0.95H9.2Q10.8 0.95 10.8 2.5V3.9Q10.8 4.8 10 5.4L6.4 8.1V8.8H10.9M12.2 0.95H16.2Q17.9 0.95 17.9 2.6V7.2Q17.9 8.8 16.2 8.8H12.2M14 4.85H17.9"/></svg>
<div class="a" style="left:1015.6px;top:259px;width:9px;height:24px;border-radius:5px;background:#dadce0"></div>

<!-- chart -->
<div class="a" style="left:562px;top:177px;width:390px;height:258px;background:#fff;border-top:1px solid #c9d3e6;border-left:1px solid #c9d3e6;border-right:2px solid #80a8ea;border-bottom:2px solid #80a8ea;border-radius:0 0 2px 0"></div>
<svg class="a" style="left:0;top:0" width="1024" height="509" id="chart"><path d="M757.00 190.00A116.5 116.5 0 0 1 867.57 269.80L812.05 288.23A58 58 0 0 0 757.00 248.50Z" fill="#4285f4"/><path d="M867.57 269.80A116.5 116.5 0 0 1 821.88 403.26L789.30 354.67A58 58 0 0 0 812.05 288.23Z" fill="#ea4335"/><path d="M821.88 403.26A116.5 116.5 0 0 1 662.75 238.02L710.08 272.41A58 58 0 0 0 789.30 354.67Z" fill="#fbbc04"/><path d="M662.75 238.02A116.5 116.5 0 0 1 757.00 190.00L757.00 248.50A58 58 0 0 0 710.08 272.41Z" fill="#34a853"/><!--LABELS--></svg>
<svg class="a" style="left:0;top:0" width="1024" height="509">
<g stroke="#a8a8a8" stroke-width="1" fill="none">
<path d="M574 208.5H707"/><path d="M821.5 217.5H940.5"/><path d="M861.5 342.5H940"/><path d="M574 383H677.5"/>
</g>
<g fill="#888"><circle cx="707" cy="208.5" r="1.3"/><circle cx="821.5" cy="217.5" r="1.3"/><circle cx="861.5" cy="342.5" r="1.3"/><circle cx="677.5" cy="383" r="1.3"/></g>
<g font-family="Liberation Sans" font-size="8.5" fill="#444">
<text x="574" y="205.8">Sunflower</text>
<text x="940" y="215" text-anchor="end">Daisy</text>
<text x="940" y="340.6" text-anchor="end">Orchid</text>
<text x="574.5" y="380.6">Rose</text>
</g>
<g font-family="Liberation Sans" font-size="8.5" fill="#a0a0a0">
<text x="574" y="216.3">15.0%</text>
<text x="940" y="225" text-anchor="end">19.9%</text>
<text x="940" y="351.3" text-anchor="end">20.7%</text>
<text x="574.5" y="390.7">44.4%</text>
</g>
</svg>

</body></html>
